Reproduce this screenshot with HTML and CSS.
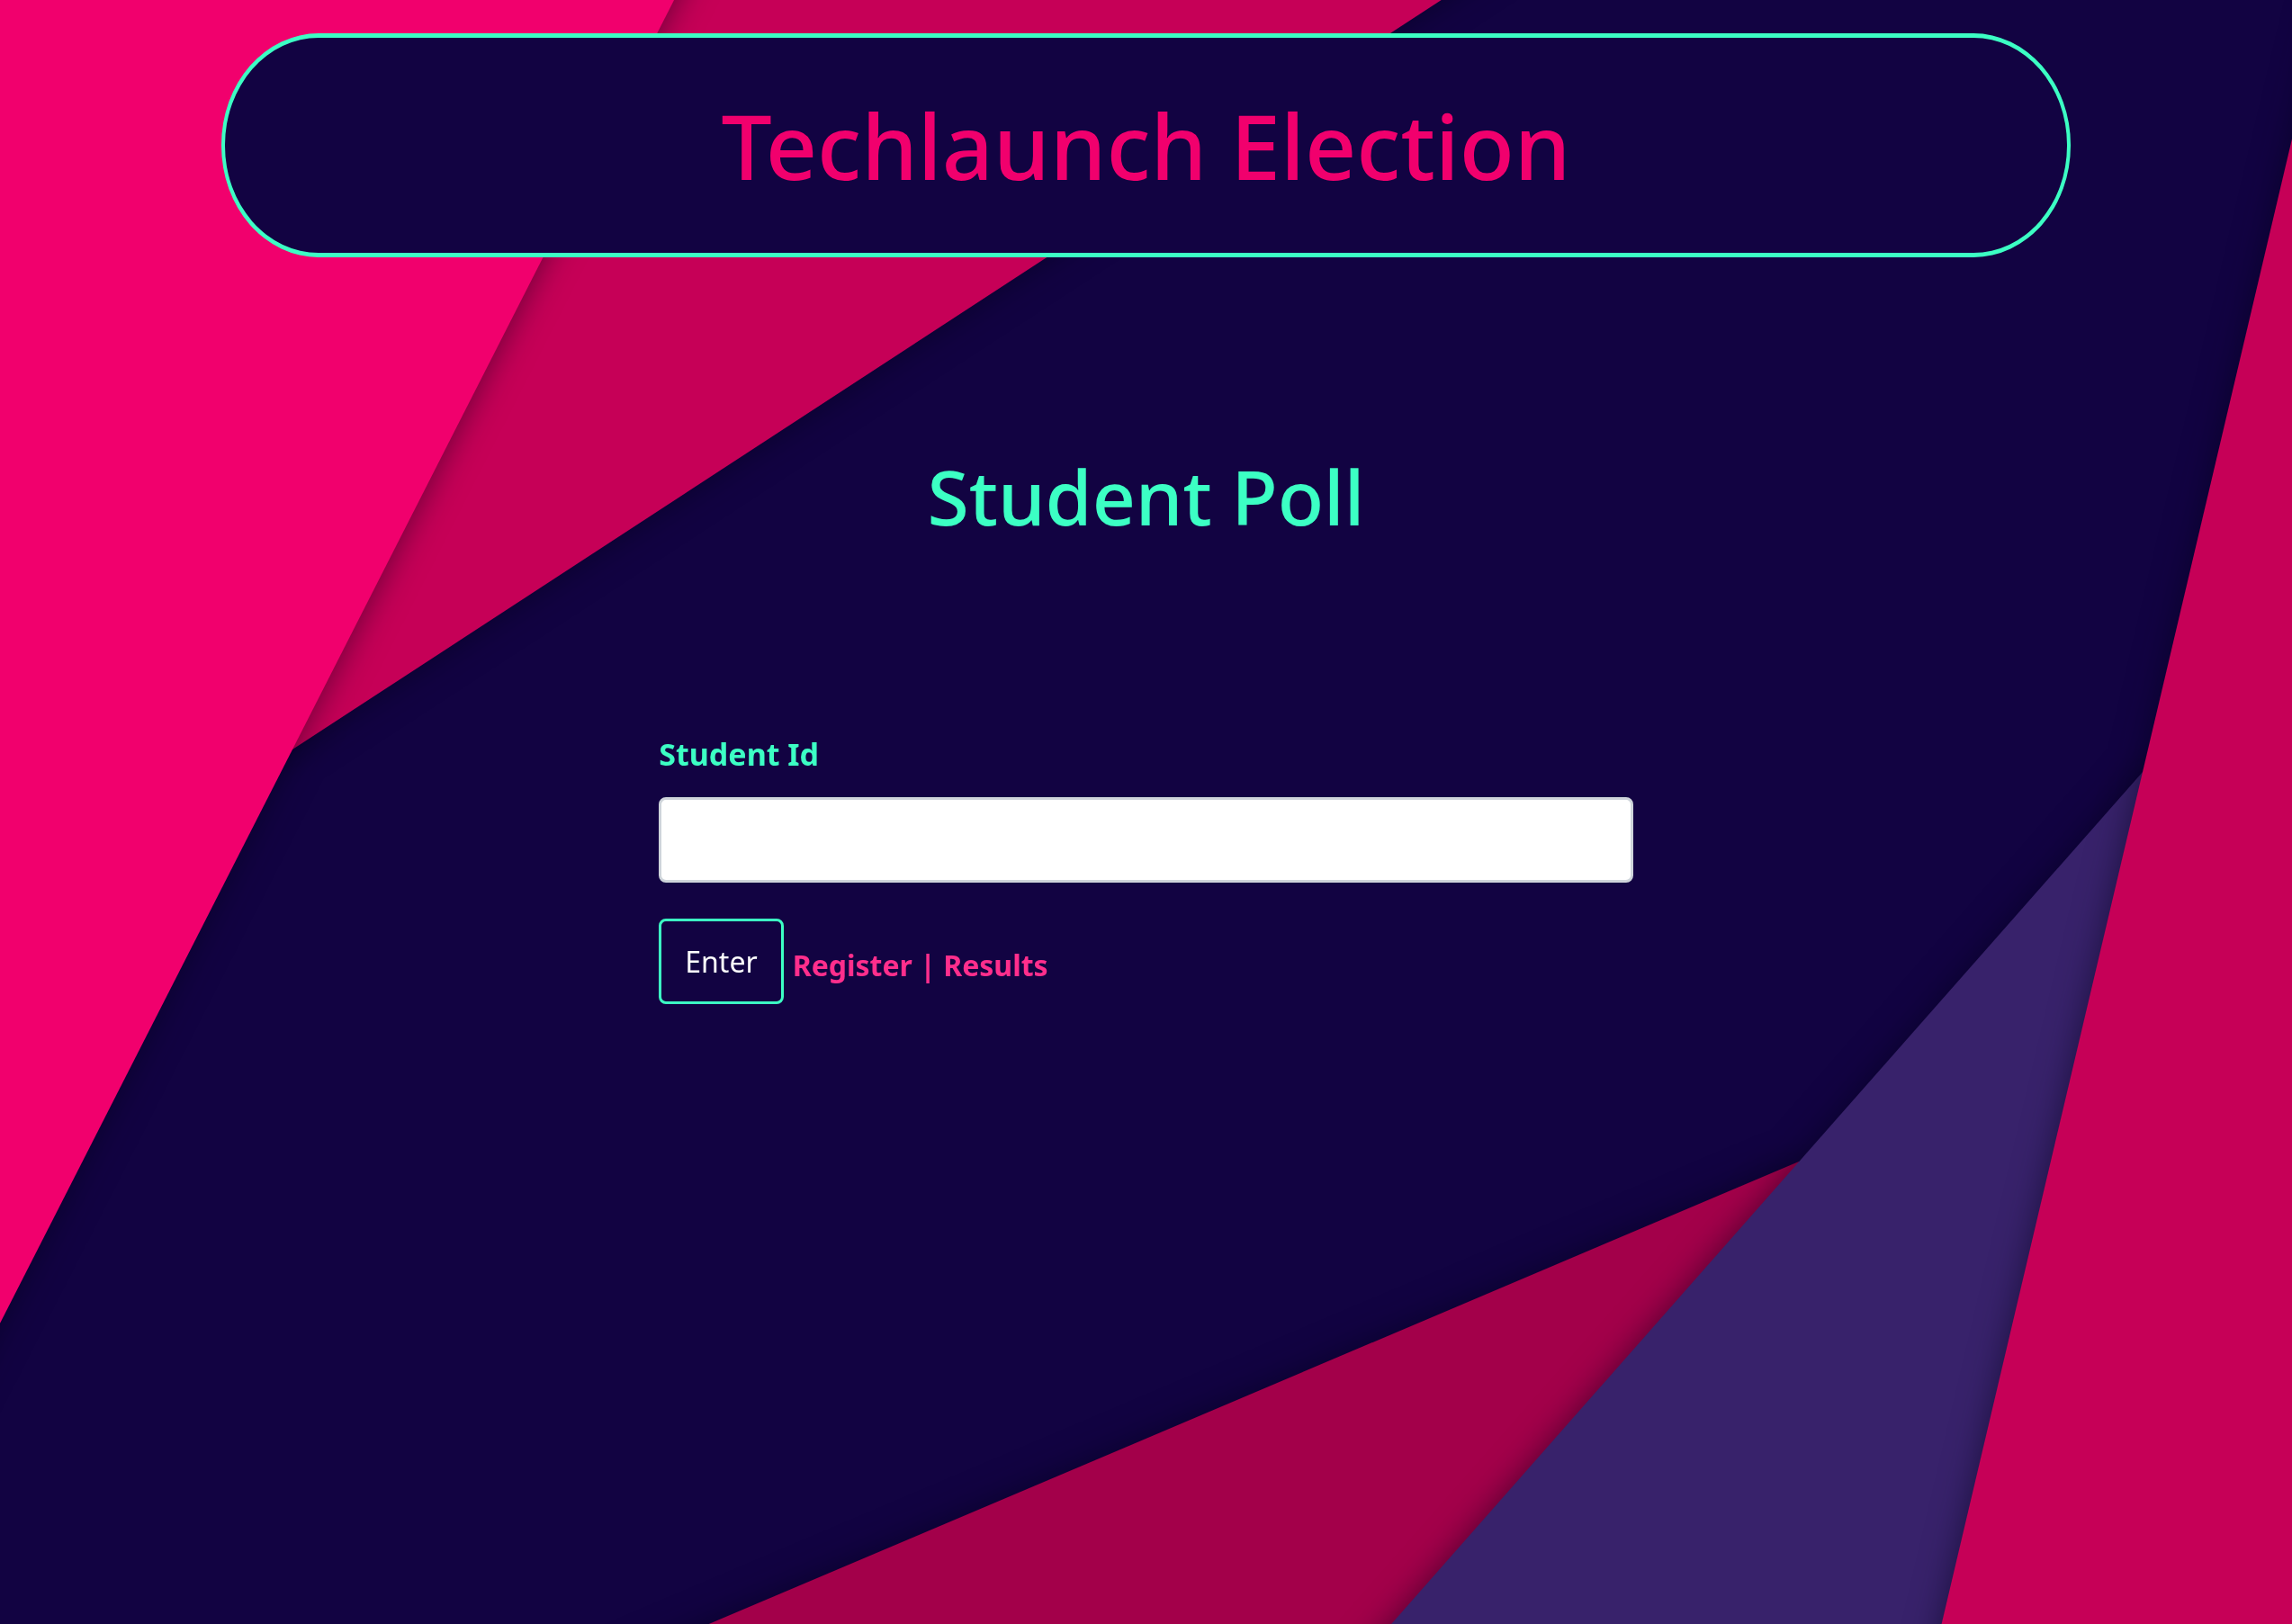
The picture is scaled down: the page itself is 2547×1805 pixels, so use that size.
FILE: index.html
```html
<!DOCTYPE html>
<html lang="en">
<head>
<meta charset="utf-8">
<meta name="viewport" content="width=device-width, initial-scale=1">
<title>Techlaunch Election</title>
<link rel="stylesheet" href="styles.css">
</head>
<body>
<svg class="backdrop" viewBox="0 0 2547 1805" preserveAspectRatio="none" aria-hidden="true">
  <polygon class="shape rose" points="-100,-100 1755,-100 325,833 -100,900"/>
  <polygon class="shape pink" points="-100,-100 800,-100 325,833 -100,1667"/>
  <polygon class="shape wine" points="552,1905 1999,1291 1999,1905"/>
  <polygon class="shape violet" points="1458,1905 2381,858 2500,858 2500,1905"/>
  <polygon class="shape rose" points="2607,-100 2134,1905 2700,1905 2700,-100"/>
</svg>
<header class="banner">
  <h1 class="banner-title">Techlaunch Election</h1>
</header>
<main class="poll">
  <h2 class="poll-title">Student Poll</h2>
  <form class="poll-form">
    <label class="field-label" for="student-id">Student Id</label>
    <input class="field-input" id="student-id" name="student-id" type="text">
    <div class="actions">
      <button class="enter" type="submit">Enter</button>
      <nav class="links"><a class="link" href="#register">Register</a> | <a class="link" href="#results">Results</a></nav>
    </div>
  </form>
</main>
</body>
</html>
```
FILE: styles.css
```css
* {
  box-sizing: border-box;
}

body {
  margin: 0;
  min-height: 100vh;
  padding-top: 37px;
  background: #120342;
  color: #3cffc4;
  font-family: "Noto Sans", "Open Sans", sans-serif;
}

.backdrop {
  position: fixed;
  inset: 0;
  z-index: -1;
  width: 100%;
  height: 100%;
}

.shape {
  filter: drop-shadow(0 0 18px rgba(0, 0, 20, 0.5));
}

.pink {
  fill: #f1006d;
}

.rose {
  fill: #c60057;
}

.wine {
  fill: #a3004a;
}

.violet {
  fill: #38226b;
}

.banner {
  width: 80.7%;
  margin: 0 auto;
  padding: 42px 24px;
  border: 5px solid #3cffc4;
  border-right-width: 4px;
  border-left-width: 4px;
  border-radius: 108px / 124px;
  background: #120342;
  text-align: center;
}

.banner-title {
  margin: 0;
  color: #f1006d;
  font-size: 100px;
  font-weight: 500;
  line-height: 155px;
}

.poll {
  width: 42.5%;
  margin: 0 auto;
  padding-top: 202px;
}

.poll-title {
  margin: 0;
  font-size: 84px;
  font-weight: 500;
  line-height: 128px;
  text-align: center;
}

.poll-form {
  display: flex;
  flex-direction: column;
  margin-top: 198px;
}

.field-label {
  font-size: 34px;
  font-weight: 700;
  line-height: 48px;
}

.field-input {
  width: 100%;
  height: 95px;
  margin-top: 24px;
  padding: 12px 24px;
  border: 3px solid #ced4da;
  border-radius: 8px;
  background: #fff;
  font: inherit;
  font-size: 32px;
}

.actions {
  display: flex;
  align-items: center;
  gap: 10px;
  margin-top: 40px;
}

.enter {
  height: 95px;
  padding: 0 26px;
  border: 3px solid #3cffc4;
  border-radius: 8px;
  background: transparent;
  color: #fff;
  font: inherit;
  font-size: 32px;
}

.links {
  padding-top: 8px;
  color: #ff2e8c;
  font-size: 32px;
  font-weight: 700;
  line-height: 48px;
}

.link {
  color: inherit;
  text-decoration: none;
}
```
